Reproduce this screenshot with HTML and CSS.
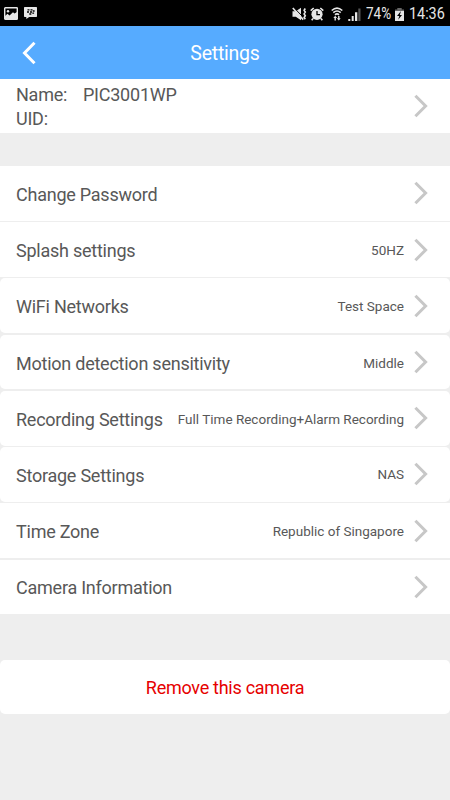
FILE: index.html
```
<!DOCTYPE html>
<html lang="en">
<head>
    <meta charset="UTF-8">
    <meta name="viewport" content="width=device-width, initial-scale=1.0">
    <title>Settings</title>
    <link rel="stylesheet" href="styles.css">
</head>
<body>
    <svg class="defs">
        <symbol id="arrow" viewBox="0 0 14 24">
            <path d="M1.4 1.7 L11.6 12 L1.4 22.3" fill="none" stroke="#c7c7c7" stroke-width="3"/>
        </symbol>
    </svg>

    <div class="status-bar">
        <svg class="icon-picture" width="14" height="13" viewBox="0 0 14 13">
            <rect x="0.7" y="0.7" width="12.6" height="11.6" rx="0.6" fill="#000" stroke="#e6e6e6" stroke-width="1.4"/>
            <path d="M1 12V9l2.5-2.2 2 1.7L9 5.2l1.5 1.3L13 5v7z" fill="#e6e6e6"/>
            <circle cx="4" cy="4.2" r="1.2" fill="#e6e6e6"/>
        </svg>
        <svg class="icon-chat" width="13" height="12" viewBox="0 0 13 12">
            <path d="M0.7 0h11.6q0.7 0 0.7 0.7v8.6q0 0.7-0.7 0.7H5.2L2.3 12V10H0.7Q0 10 0 9.3V0.7Q0 0 0.7 0z" fill="#e6e6e6"/>
            <path d="M3.5 2.8h2M6.5 2.8h2M3 5h2M6 5h2M8.800 4h1.800M5.300 7h2M8.300 6.200h1.800" stroke="#000" stroke-width="1.3" fill="none"/>
        </svg>
        <div class="status-right">
            <svg class="icon-mute" width="15" height="14" viewBox="0 0 15 14">
                <path d="M0.5 4.300h3.300L9 0.800v12.400L3.800 9.700H0.500z" fill="#e6e6e6"/>
                <path d="M2 0.800L12 11" stroke="#000" stroke-width="1"/>
                <path d="M0.800 1L11.200 12.600" stroke="#e6e6e6" stroke-width="1.600"/>
                <path d="M13.300 1.500l-1.200 1.800 1.200 1.800-1.200 1.800 1.200 1.800-1.200 1.800 1.200 1.800" stroke="#e6e6e6" stroke-width="1.600" fill="none"/>
            </svg>
            <svg class="icon-alarm" width="14" height="14" viewBox="0 0 14 14">
                <circle cx="7" cy="7.300" r="5.600" fill="#e6e6e6"/>
                <path d="M7 4v3.700h3" fill="none" stroke="#000" stroke-width="1.300"/>
                <path d="M0.700 3.700L3.700 1M10.300 1l3 2.700M3 11.500l-1.300 1.700M11 11.500l1.300 1.700" stroke="#e6e6e6" stroke-width="1.600"/>
            </svg>
            <svg class="icon-wifi" width="12" height="14" viewBox="0 0 12 14">
                <path d="M0.700 3.500Q6-1.400 11.300 3.500M2.300 5.700Q6 2.300 9.700 5.700M4 7.800Q6 6 8 7.800" fill="none" stroke="#e6e6e6" stroke-width="1.600"/>
                <path d="M2.300 11L4.200 8.700 6.100 11H4.900v2.500H3.500V11zM5.900 11.200h1.200V9h1.400v2.200h1.200L7.800 13.500z" fill="#e6e6e6"/>
            </svg>
            <svg class="icon-signal" width="13" height="13" viewBox="0 0 13 13">
                <path d="M10.300 0.500h2.200V13h-2.200z" fill="#555"/>
                <path d="M0.300 11h2v2h-2zM3.700 8h2v5h-2zM7 4.300h2.300V13H7z" fill="#e6e6e6"/>
            </svg>
            <span class="percent">74%</span>
            <svg class="icon-battery" width="9" height="13" viewBox="0 0 9 13">
                <path d="M2.300 0h4.400v1.500H9V3H0V1.500h2.300z" fill="#666"/>
                <path d="M0 3h9v10H0z" fill="#e6e6e6"/>
                <path d="M6 3L2 8h2.300L3.200 11.700 7 6.900H4.800z" fill="#000"/>
            </svg>
            <span class="clock">14:36</span>
        </div>
    </div>

    <div class="header">
        <svg class="back" width="14" height="24" viewBox="0 0 14 24">
            <path d="M12.5 1.7L2.5 12L12.5 22.3" fill="none" stroke="#fff" stroke-width="3"/>
        </svg>
        <div class="title">Settings</div>
    </div>

    <div class="device">
        <div class="device-info">
            <div><span class="key">Name:</span>PIC3001WP</div>
            <div><span class="key">UID:</span></div>
        </div>
        <svg class="arrow"><use href="#arrow"/></svg>
    </div>

    <div class="list">
        <div class="row">
            <span class="label">Change Password</span>
            <svg class="arrow"><use href="#arrow"/></svg>
        </div>
        <div class="row">
            <span class="label">Splash settings</span>
            <span class="value">50HZ</span>
            <svg class="arrow"><use href="#arrow"/></svg>
        </div>
        <div class="row rounded">
            <span class="label">WiFi Networks</span>
            <span class="value">Test Space</span>
            <svg class="arrow"><use href="#arrow"/></svg>
        </div>
        <div class="row rounded">
            <span class="label">Motion detection sensitivity</span>
            <span class="value">Middle</span>
            <svg class="arrow"><use href="#arrow"/></svg>
        </div>
        <div class="row rounded">
            <span class="label">Recording Settings</span>
            <span class="value">Full Time Recording+Alarm Recording</span>
            <svg class="arrow"><use href="#arrow"/></svg>
        </div>
        <div class="row rounded">
            <span class="label">Storage Settings</span>
            <span class="value raised">NAS</span>
            <svg class="arrow"><use href="#arrow"/></svg>
        </div>
        <div class="row">
            <span class="label">Time Zone</span>
            <span class="value">Republic of Singapore</span>
            <svg class="arrow"><use href="#arrow"/></svg>
        </div>
        <div class="row">
            <span class="label">Camera Information</span>
            <svg class="arrow"><use href="#arrow"/></svg>
        </div>
    </div>

    <button class="remove">Remove this camera</button>
</body>
</html>
```
FILE: styles.css
```
body {
    background-color: #eeeeee;
    color: #585858;
    font-family: Roboto, sans-serif;
    font-size: 18px;
    letter-spacing: -0.24px;
    height: 100vh;
    margin: 0;
    overflow: hidden;
}
.defs {
    display: none;
}
svg {
    flex-shrink: 0;
}
.status-bar {
    display: flex;
    align-items: center;
    height: 26px;
    padding: 0 6px 0 4px;
    box-sizing: border-box;
    background: #000;
    color: #e6e6e6;
    font-size: 16.5px;
}
.icon-chat {
    margin-left: 6px;
}
.status-right {
    display: flex;
    align-items: center;
    margin-left: auto;
    line-height: 26px;
    padding-top: 2px;
}
.icon-alarm {
    margin-left: 3px;
}
.icon-wifi {
    margin-left: 7px;
}
.icon-signal {
    margin-left: 5px;
}
.percent,
.clock {
    letter-spacing: 0;
    white-space: nowrap;
    transform-origin: left center;
}
.percent {
    width: 25px;
    margin-left: 5px;
    transform: scaleX(0.82);
}
.icon-battery {
    margin-left: 4px;
}
.clock {
    width: 35px;
    margin-left: 5px;
    transform: scaleX(0.87);
}
.header {
    display: grid;
    grid-template-columns: 60px 1fr 60px;
    align-items: center;
    height: 53px;
    background: #56abff;
    color: white;
}
.back {
    margin-left: 22px;
}
.title {
    padding-top: 1px;
    text-align: center;
    font-size: 19.5px;
}
.device {
    display: flex;
    align-items: center;
    height: 54px;
    margin-bottom: 33px;
    padding: 0 22px 0 16px;
    background: white;
}
.device-info {
    flex: 1;
    padding-top: 2px;
    line-height: 24px;
}
.key {
    display: inline-block;
    width: 67px;
}
.arrow {
    width: 14px;
    height: 24px;
}
.list {
    display: flex;
    flex-direction: column;
    gap: 1.65px;
    margin-bottom: 46px;
}
.row {
    display: flex;
    align-items: center;
    height: 54.6px;
    padding: 0 22px 0 16px;
    background: white;
}
.rounded {
    border-radius: 5px;
}
.label {
    flex: 1;
    padding-top: 2px;
    white-space: nowrap;
}
.value {
    margin-right: 10px;
    padding-top: 1px;
    font-size: 13.5px;
    letter-spacing: 0;
    white-space: nowrap;
}
.raised {
    padding-top: 0;
}
.remove {
    display: block;
    width: 100%;
    height: 54px;
    padding: 1px 0 0;
    border: none;
    border-radius: 5px;
    background: white;
    color: #e60000;
    font-family: inherit;
    font-size: 18px;
    letter-spacing: -0.27px;
    cursor: pointer;
}
```
